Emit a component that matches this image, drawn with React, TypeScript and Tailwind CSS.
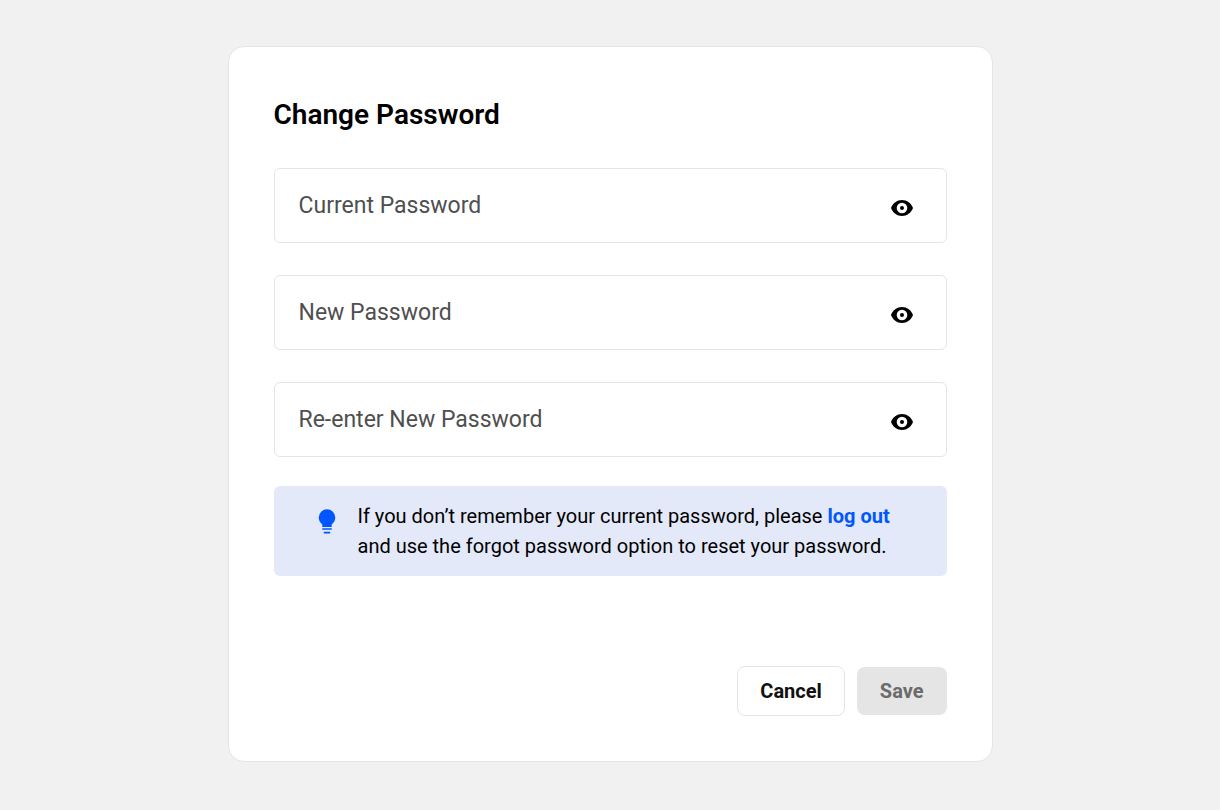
import { useState } from 'react'

interface PasswordFieldProps {
  id: string
  label: string
}

function EyeIcon() {
  return (
    <svg viewBox="0 0 24 24" className="size-6" aria-hidden="true">
      <path
        fill="currentColor"
        fillRule="evenodd"
        d="M12 4C7 4 2.8 7.2 1 12c1.8 4.8 6 8 11 8s9.200-3.200 11-8c-1.800-4.800-6-8-11-8Zm0 2.700a5.300 5.300 0 1 1 0 10.600 5.300 5.300 0 0 1 0-10.600Zm0 3.300a2 2 0 1 0 0 4 2 2 0 0 0 0-4Z"
      />
    </svg>
  )
}

function BulbIcon() {
  return (
    <svg viewBox="0 0 18 26" className="mt-2 h-[26px] w-[18px] shrink-0 text-[#0057ff]" aria-hidden="true">
      <path
        fill="currentColor"
        d="M9 .200a8.300 8.300 0 0 0-8.300 8.300c0 3 1.500 5.300 3.600 6.900V18h9.400v-2.600c2.100-1.600 3.600-3.900 3.600-6.900A8.300 8.300 0 0 0 9 .200ZM4.300 19.200h9.400v1.600H4.300ZM5.800 22.800h6.400v1.600H5.800Z"
      />
    </svg>
  )
}

function PasswordField({ id, label }: PasswordFieldProps) {
  const [visible, setVisible] = useState(false)

  return (
    <div className="flex h-[75px] items-center rounded-md border border-[#e5e5e5] bg-white pr-8">
      <div className="grid h-full min-w-0 flex-1 items-center">
        <input
          id={id}
          type={visible ? 'text' : 'password'}
          placeholder=" "
          className="peer col-start-1 row-start-1 h-full w-full bg-transparent pl-6 text-[23px] outline-none"
        />
        <label
          htmlFor={id}
          className="col-start-1 row-start-1 pl-6 text-[23px] leading-8 text-[#4f4f4f] peer-[:not(:placeholder-shown)]:invisible"
        >
          {label}
        </label>
      </div>
      <button
        type="button"
        aria-label={`Show ${label}`}
        onClick={() => setVisible(!visible)}
        className="mt-1"
      >
        <EyeIcon />
      </button>
    </div>
  )
}

export default function App() {
  return (
    <main className="min-h-screen bg-[#f1f1f1] px-4 pt-[46px] pb-12 font-[Roboto,sans-serif] text-black">
      <form
        onSubmit={(e) => e.preventDefault()}
        className="mx-auto max-w-[765px] rounded-2xl border border-[#e5e5e5] bg-white px-[45px] pt-12 pb-[45px]"
      >
        <h1 className="text-[28px] leading-10 font-semibold">Change Password</h1>

        <div className="mt-[33px] flex flex-col gap-8">
          <PasswordField id="current-password" label="Current Password" />
          <PasswordField id="new-password" label="New Password" />
          <PasswordField id="confirm-password" label="Re-enter New Password" />
        </div>

        <div className="mt-[29px] flex gap-[22px] rounded-md bg-[#e3e9f9] py-[15px] pr-10 pl-11">
          <BulbIcon />
          <p className="text-[20px] leading-[30px]">
            If you don’t remember your current password, please{' '}
            <a href="#logout" className="font-bold text-[#0057ff]">
              log out
            </a>{' '}
            and use the forgot password option to reset your password.
          </p>
        </div>

        <div className="mt-[90px] flex items-center justify-end gap-3">
          <button
            type="button"
            className="h-[50px] rounded-lg border border-[#e5e5e5] bg-white px-[22px] text-[20px] font-bold text-[#111111]"
          >
            Cancel
          </button>
          <button
            type="submit"
            disabled
            className="h-12 rounded-lg bg-[#e5e5e5] px-[23px] text-[20px] font-bold text-[#6b6b6b]"
          >
            Save
          </button>
        </div>
      </form>
    </main>
  )
}
